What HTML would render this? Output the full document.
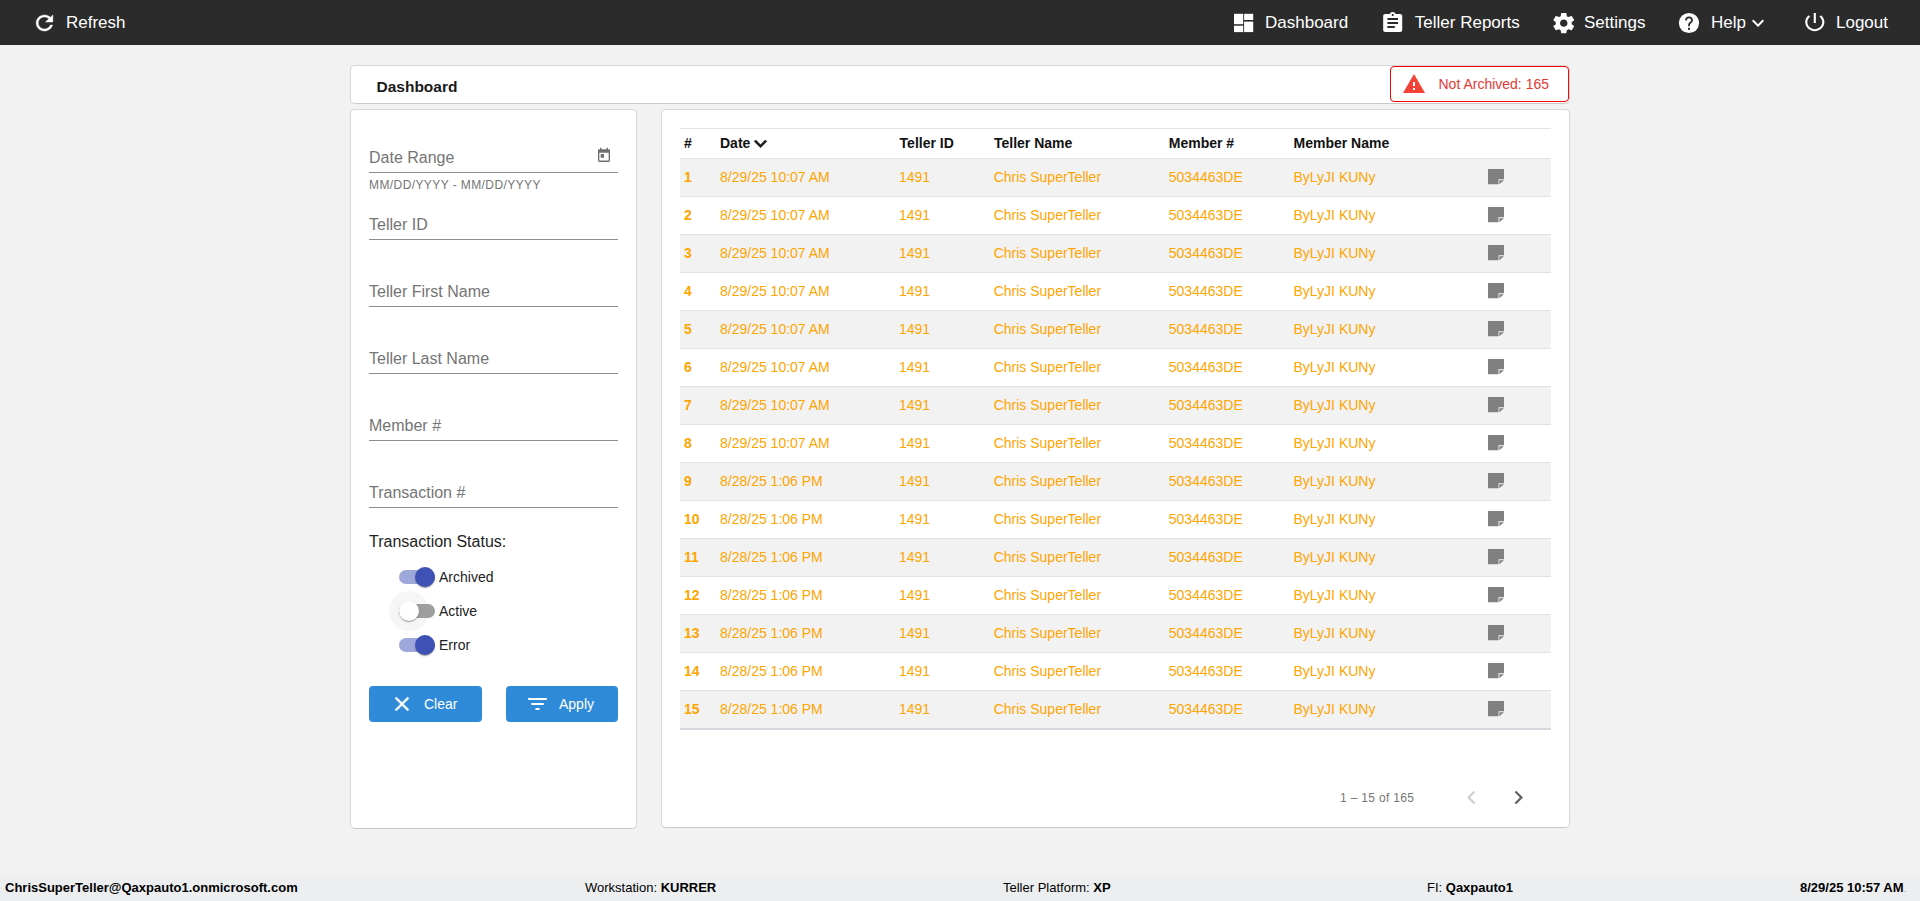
<!DOCTYPE html>
<html><head><meta charset="utf-8">
<style>
*{box-sizing:border-box;margin:0;padding:0}
html,body{width:1920px;height:901px;overflow:hidden}
body{background:#f2f2f2;font-family:"Liberation Sans",sans-serif;position:relative;color:#000}
svg{position:absolute;display:block}
#top{position:absolute;left:0;top:0;width:1920px;height:45px;background:#2b2b2b;color:#fff;font-size:17px}
#top .it{position:absolute;top:0;height:45px;line-height:45px;white-space:nowrap}
#top svg{fill:#fff}
.card{position:absolute;background:#fff;border-radius:5px;border:1px solid #d8d8d8;border-bottom-color:#c9c9c9;box-shadow:0 0 1px rgba(0,0,0,.05)}
#hdr{left:350px;top:65px;width:1220px;height:39px}
#hdr .ttl{position:absolute;left:25.5px;top:2px;line-height:38px;font-size:15.5px;font-weight:700;color:#1a1a1a}
#badge{position:absolute;left:1390px;top:66px;width:179px;height:36px;border:1px solid #f00;border-radius:4px;background:#fff;color:#e53935;font-size:14px}
#badge span{position:absolute;left:47.5px;top:0;line-height:34px;white-space:nowrap}
#left{left:350px;top:109px;width:287px;height:720px}
#right{left:661px;top:109px;width:909px;height:719px}
.uline{position:absolute;left:369px;width:249px;height:1px;background:#8d8d8d}
.lbl{position:absolute;left:369px;font-size:16px;line-height:19px;color:#757575;white-space:nowrap}
.hint{position:absolute;left:369px;font-size:12px;line-height:14px;color:#757575;letter-spacing:.41px;white-space:nowrap}
.status{position:absolute;left:369px;top:532px;font-size:16px;line-height:19px;color:#1e1e1e;white-space:nowrap}
.tg{position:absolute;left:399px;width:36px;height:14px;border-radius:7px}
.tg.on{background:#9fa8da}
.tg.off{background:#9e9e9e}
.thumb{position:absolute;width:20px;height:20px;border-radius:50%;box-shadow:0 2px 1px -1px rgba(0,0,0,.2),0 1px 1px 0 rgba(0,0,0,.14),0 1px 3px 0 rgba(0,0,0,.12)}
.thumb.on{background:#3f51b5}
.thumb.off{background:#fff}
.tgl{position:absolute;left:439px;font-size:14px;line-height:16px;color:#222;white-space:nowrap}
.btn{position:absolute;top:686px;height:36px;background:#2f8bd9;border-radius:4px;color:#fff;font-size:14px}
.btn span{position:absolute;top:0;line-height:36px}
.btn svg{fill:#fff}
.thline{position:absolute;left:680px;width:871px;height:1px;background:#e1e5ea}
.th{position:absolute;top:129px;line-height:29px;font-size:14px;font-weight:700;color:#111;white-space:nowrap}
.row{position:absolute;left:680px;width:871px;height:38px;border-top:1px solid #dfe3e8}
.cell{position:absolute;line-height:37px;font-size:14px;color:#ffa500;white-space:nowrap}
.cell.b{font-weight:700}
.note{left:1488px;fill:#808080}
.pg{position:absolute;left:1340px;top:791px;font-size:12px;line-height:14px;color:#757575;letter-spacing:.33px;white-space:nowrap}
#foot{position:absolute;left:0;top:875px;width:1920px;height:26px;background:#eceef0;font-size:13px;color:#000}
#foot span{position:absolute;top:1px;line-height:24px;white-space:nowrap}
</style></head><body>
<div id="top">
  <svg style="left:31.7px;top:10.8px" width="25" height="24" viewBox="0 0 24 24" preserveAspectRatio="none"><path stroke="#fff" stroke-width="0.45" d="M17.65 6.35C16.2 4.9 14.21 4 12 4c-4.42 0-7.990 3.58-7.99 8s3.57 8 7.99 8c3.73 0 6.84-2.55 7.73-6h-2.08c-.82 2.33-3.04 4-5.65 4-3.31 0-6-2.690-6-6s2.69-6 6-6c1.66 0 3.14.69 4.22 1.78L13 11h7V4l-2.35 2.35z"/></svg>
  <div class="it" style="left:66px">Refresh</div>
  <svg style="left:1230px;top:10px" width="26" height="26" viewBox="1230 10 26 26"><rect x="1234" y="13.8" width="9.2" height="10.4"/><rect x="1234" y="25.7" width="9.2" height="6.4"/><rect x="1244.1" y="13.8" width="9.1" height="6.2"/><rect x="1244.1" y="21.6" width="9.1" height="10.5"/></svg>
  <div class="it" style="left:1265px">Dashboard</div>
  <svg style="left:1380.4px;top:10.9px" width="25.4" height="24" viewBox="0 0 24 24" preserveAspectRatio="none"><path d="M19 3h-4.18C14.4 1.84 13.3 1 12 1c-1.3 0-2.4.84-2.82 2H5c-1.1 0-2 .9-2 2v14c0 1.1.9 2 2 2h14c1.1 0 2-.9 2-2V5c0-1.1-.9-2-2-2zm-7 0c.55 0 1 .45 1 1s-.45 1-1 1-1-.45-1-1 .45-1 1-1zm2 14H7v-2h7v2zm3-4H7v-2h10v2zm0-4H7V7h10v2z"/></svg>
  <div class="it" style="left:1414.8px">Teller Reports</div>
  <svg style="left:1550.8px;top:10.9px" width="25.5" height="24.3" viewBox="0 0 24 24" preserveAspectRatio="none"><path d="M19.43 12.98c.04-.32.07-.64.07-.98s-.03-.66-.07-.98l2.11-1.65c.19-.15.24-.42.12-.64l-2-3.46c-.12-.22-.39-.3-.61-.22l-2.49 1c-.52-.4-1.08-.73-1.69-.98l-.38-2.65C14.46 2.180 14.25 2 14 2h-4c-.25 0-.46.18-.49.42l-.38 2.65c-.61.25-1.17.59-1.69.98l-2.49-1c-.23-.09-.49 0-.61.22l-2 3.46c-.13.22-.07.49.12.64l2.11 1.65c-.04.32-.07.65-.07.98s.03.66.07.98l-2.11 1.65c-.19.15-.24.42-.12.64l2 3.46c.12.22.39.3.61.22l2.49-1c.52.4 1.08.73 1.69.98l.38 2.65c.03.24.24.42.49.42h4c.25 0 .46-.18.49-.42l.38-2.65c.61-.25 1.17-.59 1.69-.98l2.49 1c.23.09.49 0 .61-.22l2-3.46c.12-.22.07-.49-.12-.64l-2.11-1.65zM12 15.5c-1.93 0-3.5-1.57-3.5-3.5s1.57-3.5 3.5-3.5 3.5 1.57 3.5 3.5-1.57 3.5-3.5 3.5z"/></svg>
  <div class="it" style="left:1584px">Settings</div>
  <svg style="left:1676.8px;top:11px" width="24" height="24" viewBox="0 0 24 24"><circle cx="12" cy="12" r="10.1" fill="#fff"/><path d="M9 9.4A3 3 0 0 1 15 9.4C15 11.4 12 11.7 12 13.9V15.3" fill="none" stroke="#2b2b2b" stroke-width="1.8"/><rect x="11" y="16.8" width="2" height="2" fill="#2b2b2b"/></svg>
  <div class="it" style="left:1711px">Help</div>
  <svg style="left:1746px;top:11px" width="24" height="24" viewBox="0 0 24 24"><path d="M16.59 8.59L12 13.17 7.41 8.59 6 10l6 6 6-6z"/></svg>
  <svg style="left:1801.6px;top:10.1px" width="25.6" height="24.2" viewBox="0 0 24 24" preserveAspectRatio="none"><path d="M13 3h-2v10h2V3zm4.83 2.17l-1.42 1.420C17.99 7.86 19 9.81 19 12c0 3.87-3.13 7-7 7s-7-3.13-7-7c0-2.19 1.01-4.14 2.58-5.42L6.17 5.17C4.23 6.82 3 9.26 3 12c0 4.97 4.03 9 9 9s9-4.03 9-9c0-2.74-1.23-5.18-3.17-6.83z"/></svg>
  <div class="it" style="left:1836px">Logout</div>
</div>

<div id="hdr" class="card"><div class="ttl">Dashboard</div></div>
<div id="badge">
  <svg style="left:11.4px;top:5px" width="24" height="24" viewBox="0 0 24 24" fill="#f44336"><path d="M1 21h22L12 2 1 21zm12-3h-2v-2h2v2zm0-4h-2v-4h2v4z"/></svg>
  <span>Not Archived: 165</span>
</div>

<div id="left" class="card"></div>
<div class="lbl" style="top:148px">Date Range</div>
<svg style="left:596px;top:147.3px" width="16" height="17" viewBox="0 0 24 24" preserveAspectRatio="none" fill="#6f6f6f"><path d="M19 3h-1V1h-2v2H8V1H6v2H5c-1.11 0-1.99.9-1.99 2L3 19c0 1.1.89 2 2 2h14c1.1 0 2-.9 2-2V5c0-1.1-.9-2-2-2zm0 16H5V8h14v11zM7 10h5v5H7z"/></svg>
<div class="uline" style="top:172px"></div>
<div class="hint" style="top:178px">MM/DD/YYYY - MM/DD/YYYY</div>
<div class="lbl" style="top:215px">Teller ID</div>
<div class="uline" style="top:239px"></div>
<div class="lbl" style="top:282px">Teller First Name</div>
<div class="uline" style="top:306px"></div>
<div class="lbl" style="top:349px">Teller Last Name</div>
<div class="uline" style="top:373px"></div>
<div class="lbl" style="top:416px">Member #</div>
<div class="uline" style="top:440px"></div>
<div class="lbl" style="top:483px">Transaction #</div>
<div class="uline" style="top:507px"></div>
<div class="status">Transaction Status:</div>

<div class="tg on" style="top:570px"></div>
<div class="thumb on" style="left:415px;top:567px"></div>
<div class="tgl" style="top:569px">Archived</div>

<div style="position:absolute;left:389px;top:591px;width:40px;height:40px;border-radius:50%;background:rgba(0,0,0,.035)"></div>
<div class="tg off" style="top:604px"></div>
<div class="thumb off" style="left:399px;top:601px"></div>
<div class="tgl" style="top:603px">Active</div>

<div class="tg on" style="top:638px"></div>
<div class="thumb on" style="left:415px;top:635px"></div>
<div class="tgl" style="top:637px">Error</div>

<div class="btn" style="left:369px;width:113px">
  <svg style="left:21px;top:6.2px" width="24" height="24" viewBox="0 0 24 24"><path stroke="#fff" stroke-width="0.35" d="M19 6.41L17.59 5 12 10.59 6.41 5 5 6.41 10.590 12 5 17.59 6.41 19 12 13.41 17.59 19 19 17.59 13.41 12z"/></svg>
  <span style="left:55px">Clear</span>
</div>
<div class="btn" style="left:506px;width:112px">
  <svg style="left:18.8px;top:6px" width="25" height="24" viewBox="0 0 24 24" preserveAspectRatio="none"><path d="M10 18h4v-2h-4v2zM3 6v2h18V6H3zm3 7h12v-2H6v2z"/></svg>
  <span style="left:53px">Apply</span>
</div>

<div id="right" class="card"></div>
<div class="thline" style="top:128px"></div>
<div class="th" style="left:684px">#</div>
<div class="th" style="left:720px">Date</div>
<svg style="left:748.3px;top:130.6px" width="25" height="25" viewBox="0 0 24 24" fill="#1a1a1a"><path stroke="#1a1a1a" stroke-width="0.55" d="M16.59 8.59L12 13.17 7.41 8.59 6 10l6 6 6-6z"/></svg>
<div class="th" style="left:899.6px">Teller ID</div>
<div class="th" style="left:994px">Teller Name</div>
<div class="th" style="left:1168.8px">Member #</div>
<div class="th" style="left:1293.5px">Member Name</div>
<div class="row" style="top:158px;background:#f2f2f2"></div>
<div class="cell b" style="top:159px;left:684px">1</div>
<div class="cell" style="top:159px;left:720px">8/29/25 10:07 AM</div>
<div class="cell" style="top:159px;left:899px">1491</div>
<div class="cell" style="top:159px;left:993.7px">Chris SuperTeller</div>
<div class="cell" style="top:159px;left:1168.8px">5034463DE</div>
<div class="cell" style="top:159px;left:1293.5px">ByLyJI KUNy</div>
<svg class="note" style="top:168.7px" width="17" height="16" viewBox="0 0 17 16"><path d="M0 0H16V10.3H10.5V15.3H0Z"/><path d="M11.3 11.2H16L11.3 15.3Z"/></svg>
<div class="row" style="top:196px;background:#fff"></div>
<div class="cell b" style="top:197px;left:684px">2</div>
<div class="cell" style="top:197px;left:720px">8/29/25 10:07 AM</div>
<div class="cell" style="top:197px;left:899px">1491</div>
<div class="cell" style="top:197px;left:993.7px">Chris SuperTeller</div>
<div class="cell" style="top:197px;left:1168.8px">5034463DE</div>
<div class="cell" style="top:197px;left:1293.5px">ByLyJI KUNy</div>
<svg class="note" style="top:206.7px" width="17" height="16" viewBox="0 0 17 16"><path d="M0 0H16V10.3H10.5V15.3H0Z"/><path d="M11.3 11.2H16L11.3 15.3Z"/></svg>
<div class="row" style="top:234px;background:#f2f2f2"></div>
<div class="cell b" style="top:235px;left:684px">3</div>
<div class="cell" style="top:235px;left:720px">8/29/25 10:07 AM</div>
<div class="cell" style="top:235px;left:899px">1491</div>
<div class="cell" style="top:235px;left:993.7px">Chris SuperTeller</div>
<div class="cell" style="top:235px;left:1168.8px">5034463DE</div>
<div class="cell" style="top:235px;left:1293.5px">ByLyJI KUNy</div>
<svg class="note" style="top:244.7px" width="17" height="16" viewBox="0 0 17 16"><path d="M0 0H16V10.3H10.5V15.3H0Z"/><path d="M11.3 11.2H16L11.3 15.3Z"/></svg>
<div class="row" style="top:272px;background:#fff"></div>
<div class="cell b" style="top:273px;left:684px">4</div>
<div class="cell" style="top:273px;left:720px">8/29/25 10:07 AM</div>
<div class="cell" style="top:273px;left:899px">1491</div>
<div class="cell" style="top:273px;left:993.7px">Chris SuperTeller</div>
<div class="cell" style="top:273px;left:1168.8px">5034463DE</div>
<div class="cell" style="top:273px;left:1293.5px">ByLyJI KUNy</div>
<svg class="note" style="top:282.7px" width="17" height="16" viewBox="0 0 17 16"><path d="M0 0H16V10.3H10.5V15.3H0Z"/><path d="M11.3 11.2H16L11.3 15.3Z"/></svg>
<div class="row" style="top:310px;background:#f2f2f2"></div>
<div class="cell b" style="top:311px;left:684px">5</div>
<div class="cell" style="top:311px;left:720px">8/29/25 10:07 AM</div>
<div class="cell" style="top:311px;left:899px">1491</div>
<div class="cell" style="top:311px;left:993.7px">Chris SuperTeller</div>
<div class="cell" style="top:311px;left:1168.8px">5034463DE</div>
<div class="cell" style="top:311px;left:1293.5px">ByLyJI KUNy</div>
<svg class="note" style="top:320.7px" width="17" height="16" viewBox="0 0 17 16"><path d="M0 0H16V10.3H10.5V15.3H0Z"/><path d="M11.3 11.2H16L11.3 15.3Z"/></svg>
<div class="row" style="top:348px;background:#fff"></div>
<div class="cell b" style="top:349px;left:684px">6</div>
<div class="cell" style="top:349px;left:720px">8/29/25 10:07 AM</div>
<div class="cell" style="top:349px;left:899px">1491</div>
<div class="cell" style="top:349px;left:993.7px">Chris SuperTeller</div>
<div class="cell" style="top:349px;left:1168.8px">5034463DE</div>
<div class="cell" style="top:349px;left:1293.5px">ByLyJI KUNy</div>
<svg class="note" style="top:358.7px" width="17" height="16" viewBox="0 0 17 16"><path d="M0 0H16V10.3H10.5V15.3H0Z"/><path d="M11.3 11.2H16L11.3 15.3Z"/></svg>
<div class="row" style="top:386px;background:#f2f2f2"></div>
<div class="cell b" style="top:387px;left:684px">7</div>
<div class="cell" style="top:387px;left:720px">8/29/25 10:07 AM</div>
<div class="cell" style="top:387px;left:899px">1491</div>
<div class="cell" style="top:387px;left:993.7px">Chris SuperTeller</div>
<div class="cell" style="top:387px;left:1168.8px">5034463DE</div>
<div class="cell" style="top:387px;left:1293.5px">ByLyJI KUNy</div>
<svg class="note" style="top:396.7px" width="17" height="16" viewBox="0 0 17 16"><path d="M0 0H16V10.3H10.5V15.3H0Z"/><path d="M11.3 11.2H16L11.3 15.3Z"/></svg>
<div class="row" style="top:424px;background:#fff"></div>
<div class="cell b" style="top:425px;left:684px">8</div>
<div class="cell" style="top:425px;left:720px">8/29/25 10:07 AM</div>
<div class="cell" style="top:425px;left:899px">1491</div>
<div class="cell" style="top:425px;left:993.7px">Chris SuperTeller</div>
<div class="cell" style="top:425px;left:1168.8px">5034463DE</div>
<div class="cell" style="top:425px;left:1293.5px">ByLyJI KUNy</div>
<svg class="note" style="top:434.7px" width="17" height="16" viewBox="0 0 17 16"><path d="M0 0H16V10.3H10.5V15.3H0Z"/><path d="M11.3 11.2H16L11.3 15.3Z"/></svg>
<div class="row" style="top:462px;background:#f2f2f2"></div>
<div class="cell b" style="top:463px;left:684px">9</div>
<div class="cell" style="top:463px;left:720px">8/28/25 1:06 PM</div>
<div class="cell" style="top:463px;left:899px">1491</div>
<div class="cell" style="top:463px;left:993.7px">Chris SuperTeller</div>
<div class="cell" style="top:463px;left:1168.8px">5034463DE</div>
<div class="cell" style="top:463px;left:1293.5px">ByLyJI KUNy</div>
<svg class="note" style="top:472.7px" width="17" height="16" viewBox="0 0 17 16"><path d="M0 0H16V10.3H10.5V15.3H0Z"/><path d="M11.3 11.2H16L11.3 15.3Z"/></svg>
<div class="row" style="top:500px;background:#fff"></div>
<div class="cell b" style="top:501px;left:684px">10</div>
<div class="cell" style="top:501px;left:720px">8/28/25 1:06 PM</div>
<div class="cell" style="top:501px;left:899px">1491</div>
<div class="cell" style="top:501px;left:993.7px">Chris SuperTeller</div>
<div class="cell" style="top:501px;left:1168.8px">5034463DE</div>
<div class="cell" style="top:501px;left:1293.5px">ByLyJI KUNy</div>
<svg class="note" style="top:510.7px" width="17" height="16" viewBox="0 0 17 16"><path d="M0 0H16V10.3H10.5V15.3H0Z"/><path d="M11.3 11.2H16L11.3 15.3Z"/></svg>
<div class="row" style="top:538px;background:#f2f2f2"></div>
<div class="cell b" style="top:539px;left:684px">11</div>
<div class="cell" style="top:539px;left:720px">8/28/25 1:06 PM</div>
<div class="cell" style="top:539px;left:899px">1491</div>
<div class="cell" style="top:539px;left:993.7px">Chris SuperTeller</div>
<div class="cell" style="top:539px;left:1168.8px">5034463DE</div>
<div class="cell" style="top:539px;left:1293.5px">ByLyJI KUNy</div>
<svg class="note" style="top:548.7px" width="17" height="16" viewBox="0 0 17 16"><path d="M0 0H16V10.3H10.5V15.3H0Z"/><path d="M11.3 11.2H16L11.3 15.3Z"/></svg>
<div class="row" style="top:576px;background:#fff"></div>
<div class="cell b" style="top:577px;left:684px">12</div>
<div class="cell" style="top:577px;left:720px">8/28/25 1:06 PM</div>
<div class="cell" style="top:577px;left:899px">1491</div>
<div class="cell" style="top:577px;left:993.7px">Chris SuperTeller</div>
<div class="cell" style="top:577px;left:1168.8px">5034463DE</div>
<div class="cell" style="top:577px;left:1293.5px">ByLyJI KUNy</div>
<svg class="note" style="top:586.7px" width="17" height="16" viewBox="0 0 17 16"><path d="M0 0H16V10.3H10.5V15.3H0Z"/><path d="M11.3 11.2H16L11.3 15.3Z"/></svg>
<div class="row" style="top:614px;background:#f2f2f2"></div>
<div class="cell b" style="top:615px;left:684px">13</div>
<div class="cell" style="top:615px;left:720px">8/28/25 1:06 PM</div>
<div class="cell" style="top:615px;left:899px">1491</div>
<div class="cell" style="top:615px;left:993.7px">Chris SuperTeller</div>
<div class="cell" style="top:615px;left:1168.8px">5034463DE</div>
<div class="cell" style="top:615px;left:1293.5px">ByLyJI KUNy</div>
<svg class="note" style="top:624.7px" width="17" height="16" viewBox="0 0 17 16"><path d="M0 0H16V10.3H10.5V15.3H0Z"/><path d="M11.3 11.2H16L11.3 15.3Z"/></svg>
<div class="row" style="top:652px;background:#fff"></div>
<div class="cell b" style="top:653px;left:684px">14</div>
<div class="cell" style="top:653px;left:720px">8/28/25 1:06 PM</div>
<div class="cell" style="top:653px;left:899px">1491</div>
<div class="cell" style="top:653px;left:993.7px">Chris SuperTeller</div>
<div class="cell" style="top:653px;left:1168.8px">5034463DE</div>
<div class="cell" style="top:653px;left:1293.5px">ByLyJI KUNy</div>
<svg class="note" style="top:662.7px" width="17" height="16" viewBox="0 0 17 16"><path d="M0 0H16V10.3H10.5V15.3H0Z"/><path d="M11.3 11.2H16L11.3 15.3Z"/></svg>
<div class="row" style="top:690px;background:#f2f2f2"></div>
<div class="cell b" style="top:691px;left:684px">15</div>
<div class="cell" style="top:691px;left:720px">8/28/25 1:06 PM</div>
<div class="cell" style="top:691px;left:899px">1491</div>
<div class="cell" style="top:691px;left:993.7px">Chris SuperTeller</div>
<div class="cell" style="top:691px;left:1168.8px">5034463DE</div>
<div class="cell" style="top:691px;left:1293.5px">ByLyJI KUNy</div>
<svg class="note" style="top:700.7px" width="17" height="16" viewBox="0 0 17 16"><path d="M0 0H16V10.3H10.5V15.3H0Z"/><path d="M11.3 11.2H16L11.3 15.3Z"/></svg>
<div class="thline" style="top:728px;height:2px;background:#d5d9de"></div>

<div class="pg">1 – 15 of 165</div>
<svg style="left:1457.5px;top:783.5px" width="27" height="27" viewBox="0 0 24 24" fill="#cfcfcf"><path d="M15.41 7.41L14 6l-6 6 6 6 1.41-1.41L10.83 12z"/></svg>
<svg style="left:1505px;top:783.5px" width="27" height="27" viewBox="0 0 24 24" fill="#616161"><path d="M10 6L8.59 7.41 13.17 12l-4.58 4.59L10 18l6-6z"/></svg>

<div id="foot">
  <span style="left:5px;font-weight:700">ChrisSuperTeller@Qaxpauto1.onmicrosoft.com</span>
  <span style="left:585px">Workstation: <b>KURRER</b></span>
  <span style="left:1003px">Teller Platform: <b>XP</b></span>
  <span style="left:1427px">FI: <b>Qaxpauto1</b></span>
  <span style="left:1800px;font-weight:700">8/29/25 10:57 AM<i style="font-style:normal;font-weight:400;color:#b0b0b0;font-size:11px">.</i></span>
</div>
</body></html>
